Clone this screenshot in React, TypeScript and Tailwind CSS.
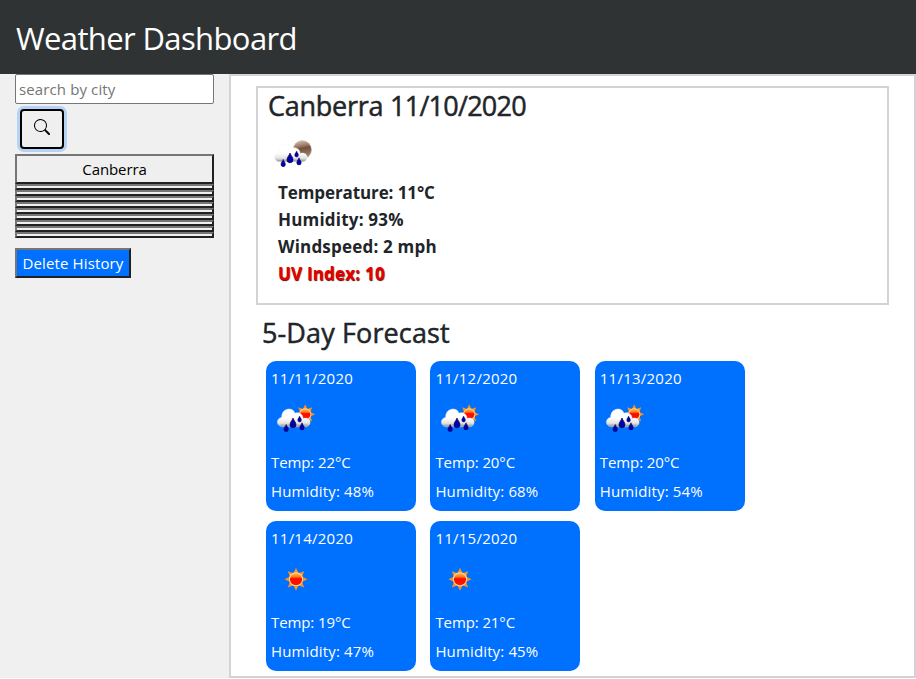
import React from "react";

const days = [
  { date: "11/11/2020", icon: "rain", temp: 22, humidity: 48 },
  { date: "11/12/2020", icon: "rain", temp: 20, humidity: 68 },
  { date: "11/13/2020", icon: "rain", temp: 20, humidity: 54 },
  { date: "11/14/2020", icon: "sun", temp: 19, humidity: 47 },
  { date: "11/15/2020", icon: "sun", temp: 21, humidity: 45 },
];

const rays = [0, 45, 90, 135, 180, 225, 270, 315];

function Sun({ x, y, r }: { x: number; y: number; r: number }) {
  return (
    <g transform={`translate(${x} ${y}) scale(${r})`}>
      {rays.map((a) => (
        <path key={a} d="M-0.42 -0.75 L0 -1.65 L0.42 -0.75 Z" fill="#f7941d" transform={`rotate(${a})`} />
      ))}
      <circle r="1" fill="#ffd9a0" />
      <circle r="0.86" fill="url(#sunFill)" />
    </g>
  );
}

function Defs() {
  return (
    <defs>
      <linearGradient id="sunFill" x1="0" y1="0" x2="0" y2="1">
        <stop offset="0" stopColor="#ffb850" />
        <stop offset="0.3" stopColor="#ff7a13" />
        <stop offset="0.45" stopColor="#ff0800" />
        <stop offset="1" stopColor="#f51a00" />
      </linearGradient>
      <linearGradient id="moonFill" x1="0" y1="0" x2="0.2" y2="1">
        <stop offset="0" stopColor="#e0d0c4" />
        <stop offset="0.4" stopColor="#94705a" />
        <stop offset="0.5" stopColor="#6f503c" />
        <stop offset="1" stopColor="#a58a77" />
      </linearGradient>
      <linearGradient id="cloudFill" x1="0" y1="0" x2="0" y2="1">
        <stop offset="0.5" stopColor="#ffffff" />
        <stop offset="0.8" stopColor="#e3e3e3" />
        <stop offset="1" stopColor="#8c8c8c" />
      </linearGradient>
    </defs>
  );
}

const drops = [
  [15.2, 26.3, 0.85],
  [22, 20.5, 1.15],
  [28.6, 17.6, 0.7],
  [31, 24.6, 0.85],
];

function WeatherIcon({ kind }: { kind: string }) {
  return (
    <svg viewBox="0 -0.8 50 40" className="block h-[40px] w-[50px]">
      <Defs />
      {kind === "sun" && <Sun x={25} y={19.5} r={7} />}
      {kind === "rain" && <Sun x={34.2} y={14.4} r={6} />}
      {kind === "night" && <circle cx="34.3" cy="15" r="9.2" fill="url(#moonFill)" stroke="#c8b7aa" strokeWidth="0.5" />}
      {kind !== "sun" && (
        <>
          <path
            d="M12 27 C4.6 26.6 5 18.4 10.6 17.6 C10.4 8 22 6.6 24 13.4 C28.5 12 32.4 15 32 18.8 C36.3 17.2 39.8 19.8 39 23.4 C38.2 26.4 36 27 33.2 27 Z"
            fill="url(#cloudFill)"
            stroke="#f3f3f3"
            strokeWidth="0.4"
          />
          {drops.map(([x, y, s]) => (
            <path
              key={x}
              transform={`translate(${x} ${y}) scale(${s})`}
              d="M0 -2 C0.8 0.6 2.6 1.5 2.6 3.9 A2.6 2.6 0 0 1 -2.6 3.9 C-2.6 1.5 -0.8 0.6 0 -2 Z"
              fill="#0000b0"
              stroke="#00004e"
              strokeWidth="0.6"
            />
          ))}
        </>
      )}
    </svg>
  );
}

const bevel = "border-2 border-t-[#767676] border-l-[#767676] border-r-[#212121] border-b-[#212121]";

export default function App() {
  return (
    <div className="flex h-[679px] w-[916px] flex-col overflow-hidden bg-white font-['Open_Sans','Noto_Sans',sans-serif] text-[#212529]">
      <header className="h-[74px] shrink-0 bg-[#2f3333] px-4 pt-[14px]">
        <h1 className="text-[31px] leading-[48px] tracking-[-0.62px] text-white">Weather Dashboard</h1>
      </header>
      <div className="flex h-[604px]">
        <aside className="flex w-[229px] shrink-0 flex-col items-start bg-[#f0f0f0] pl-[15px]">
          <input
            placeholder="search by city"
            className="h-[30px] w-[199px] rounded-[2px] border border-[#767676] bg-white px-[3px] text-[15px] tracking-[0.12px] placeholder:text-[#757575]"
          />
          <button className="mt-[5px] ml-[5px] flex h-[40px] w-[44px] items-center justify-center rounded-[4px] border-2 border-black bg-[#efefef] pb-1 ring-3 ring-[#b4d3f5]">
            <svg viewBox="0 0 16 16" className="size-4" fill="#000">
              <path d="M11.742 10.344a6.5 6.5 0 1 0-1.397 1.398h-.001c.03.04.062.078.098.115l3.85 3.85a1 1 0 0 0 1.415-1.414l-3.85-3.85a1.007 1.007 0 0 0-.115-.1zM12 6.5a5.5 5.5 0 1 1-11 0 5.5 5.5 0 0 1 11 0z" />
            </svg>
          </button>
          <div className="mt-[5px] flex w-[199px] flex-col">
            <button className={`h-[30px] bg-[#efefef] text-[15px] leading-[24px] tracking-[-0.1px] text-black ${bevel}`}>Canberra</button>
            {Array.from({ length: 9 }, (_, i) => (
              <button key={i} className={`h-[6px] bg-[#efefef] ${bevel}`} />
            ))}
          </div>
          <button className={`mt-[10px] h-[30px] w-[116px] bg-[#0070ff] text-[15px] leading-[24px] tracking-[0.12px] whitespace-nowrap text-white ${bevel}`}>
            Delete History
          </button>
        </aside>
        <main className="flex-1 border-2 border-[#d3d3d3] px-[25px] pt-[10px]">
          <section className="h-[219px] border-2 border-[#d3d3d3] pl-[10px]">
            <h2 className="pt-[1px] text-[27px] leading-[34px] font-medium tracking-[-0.75px] [-webkit-text-stroke:0.5px_#212529]">
              <span className="tracking-[-0.25px]">Canberra </span>11/10/2020
            </h2>
            <div className="mt-[11px]">
              <WeatherIcon kind="night" />
            </div>
            <div className="mt-[5px] pl-[10px] text-[17px] leading-[27px] font-bold tracking-[0.2px]">
              <p className="tracking-[-0.1px]">Temperature: 11°C</p>
              <p>Humidity: 93%</p>
              <p>Windspeed: 2 mph</p>
              <p className="text-[#e60000] [text-shadow:0.5px_0.5px_1px_#500]">UV Index: 10</p>
            </div>
          </section>
          <h2 className="mt-[11px] pl-[6px] text-[27px] leading-[34px] font-medium tracking-[0.12px] [-webkit-text-stroke:0.5px_#212529]">5-Day Forecast</h2>
          <div className="mt-[11px] ml-[10px] grid w-[480px] grid-cols-[150px_150px_150px] gap-x-[14.4px] gap-y-[10px]">
            {days.map((d) => (
              <article key={d.date} className="h-[150px] rounded-[10px] bg-[#0070ff] pl-[5px] text-[15px] leading-[24px] text-white">
                <p className="pt-[5px] tracking-[0.24px]">{d.date}</p>
                <div className="mt-[9px]">
                  <WeatherIcon kind={d.icon} />
                </div>
                <p className="mt-[11px] tracking-[-0.1px]">Temp: {d.temp}°C</p>
                <p className="mt-[5px] tracking-[0.14px]">Humidity: {d.humidity}%</p>
              </article>
            ))}
          </div>
        </main>
      </div>
    </div>
  );
}
